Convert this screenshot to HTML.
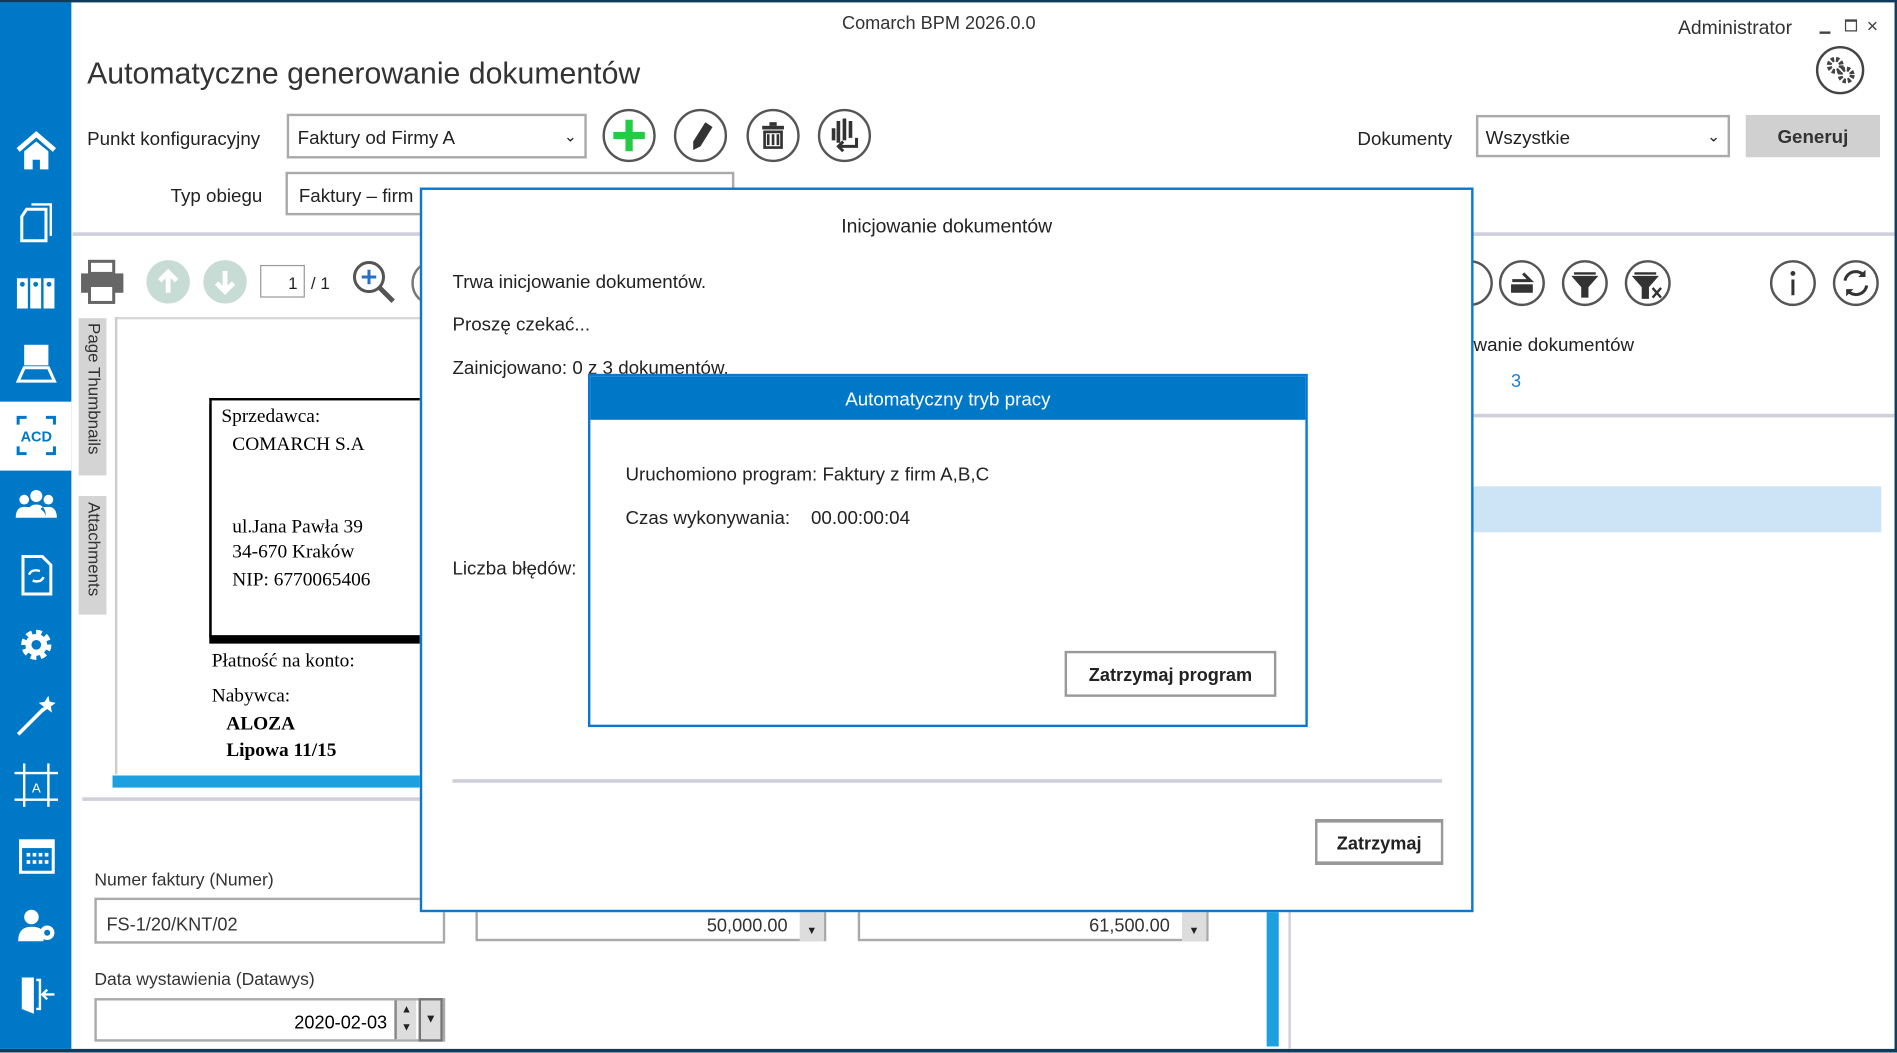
<!DOCTYPE html>
<html><head><meta charset="utf-8">
<style>
*{margin:0;padding:0;box-sizing:border-box}
html,body{width:1897px;height:1052px;overflow:hidden;background:#fff}
#w{position:absolute;left:0;top:0;width:1568px;height:870px;transform:scale(1.2098);transform-origin:0 0;font-family:"Liberation Sans",sans-serif;color:#222;background:#fff}
.a{position:absolute}
.t{position:absolute;white-space:nowrap;font-size:15px;color:#222;margin-top:2px}
.box{position:absolute;border:2px solid #aaa;background:#fff}
.cb{position:absolute;width:44px;height:44px;border:2px solid #555;border-radius:50%;background:#fff}
.rc{position:absolute;width:38px;height:38px;border:2px solid #555;border-radius:50%;background:#fff}
.sb svg{position:absolute;left:12px}
.btn{position:absolute;border:2px solid #999;background:#fff;font-weight:bold;font-size:15px;text-align:center}
</style></head><body><div id="w">
<div class="a" style="left:0;top:0;width:1568px;height:2px;background:#0e3a5c"></div>
<div class="a" style="left:0;top:867px;width:1568px;height:3px;background:#0e3a5c"></div>
<div class="a" style="left:1566px;top:0;width:2px;height:870px;background:#0e3a5c"></div>
<div class="a sb" style="left:0;top:2px;width:59px;height:865px;background:#0078c8">
 <div class="a" style="left:0;top:330px;width:59px;height:57px;background:#fff"></div>
 <svg style="top:105px" width="36" height="36" viewBox="0 0 36 36"><path d="M3 17L18 4l15 13" stroke="#fff" stroke-width="4" fill="none"/><path d="M8 18v15h7v-8h6v8h7V18L18 10z" fill="#fff"/></svg>
 <svg style="top:163px" width="36" height="36" viewBox="0 0 36 36"><path d="M14 4h16v26" stroke="#fff" stroke-width="2" fill="none"/><path d="M10 8h16v26H6V14z" stroke="#fff" stroke-width="2.5" fill="none"/></svg>
 <svg style="top:222px" width="36" height="36" viewBox="0 0 36 36" fill="#fff"><rect x="2" y="6" width="9" height="25"/><rect x="13" y="6" width="9" height="25"/><rect x="24" y="6" width="9" height="25"/><circle cx="6.5" cy="11" r="2" fill="#0078c8"/><circle cx="17.5" cy="11" r="2" fill="#0078c8"/><circle cx="28.5" cy="11" r="2" fill="#0078c8"/></svg>
 <svg style="top:280px" width="36" height="36" viewBox="0 0 36 36" fill="#fff"><rect x="8" y="3" width="20" height="17"/><path d="M3 33l5-11h20l5 11z" fill="none" stroke="#fff" stroke-width="2.5"/></svg>
 <svg style="top:340px" width="36" height="36" viewBox="0 0 36 36"><path d="M3 9V3h7M26 3h7v6M3 27v6h7M26 33h7v-6" stroke="#0078c8" stroke-width="2.5" fill="none"/><text x="18" y="23" text-anchor="middle" font-size="12" font-weight="bold" fill="#0078c8" font-family="Liberation Sans">ACD</text></svg>
 <svg style="top:398px" width="36" height="36" viewBox="0 0 36 36" fill="#fff"><circle cx="18" cy="10" r="5"/><circle cx="8" cy="13" r="4"/><circle cx="28" cy="13" r="4"/><path d="M10 28q0-11 8-11t8 11zM1 28q0-9 7-9t6 2q-4 3-4 7zM35 28q0-9-7-9t-6 2q4 3 4 7z"/></svg>
 <svg style="top:455px" width="36" height="36" viewBox="0 0 36 36"><path d="M7 3h16l7 7v24H7z" stroke="#fff" stroke-width="2.5" fill="none"/><path d="M12 18q2-5 9-3M24 20q-2 5-9 3" stroke="#fff" stroke-width="2" fill="none"/></svg>
 <svg style="top:513px" width="36" height="36" viewBox="0 0 36 36"><circle cx="18" cy="18" r="9" stroke="#fff" stroke-width="7" fill="none" stroke-dasharray="4 3"/><circle cx="18" cy="18" r="9" fill="#fff"/><circle cx="18" cy="18" r="4" fill="#0078c8"/></svg>
 <svg style="top:571px" width="36" height="36" viewBox="0 0 36 36"><path d="M3 34L24 13" stroke="#fff" stroke-width="3"/><path d="M28 2l1 5 5 1-4 3 1 5-4-3-4 3 1-5-4-3 5-1z" fill="#fff"/></svg>
 <svg style="top:629px" width="36" height="36" viewBox="0 0 36 36"><path d="M0 8h36M0 30h36M8 0v36M28 0v36" stroke="#fff" stroke-width="2"/><text x="18" y="24" text-anchor="middle" font-size="11" fill="#fff" font-family="Liberation Sans">A</text></svg>
 <svg style="top:688px" width="36" height="36" viewBox="0 0 36 36"><rect x="5" y="5" width="27" height="26" stroke="#fff" stroke-width="2.5" fill="none"/><rect x="5" y="5" width="27" height="6" fill="#fff"/><g fill="#fff"><rect x="10" y="15" width="3" height="3"/><rect x="15" y="15" width="3" height="3"/><rect x="20" y="15" width="3" height="3"/><rect x="25" y="15" width="3" height="3"/><rect x="10" y="21" width="3" height="3"/><rect x="15" y="21" width="3" height="3"/><rect x="20" y="21" width="3" height="3"/><rect x="25" y="21" width="3" height="3"/></g></svg>
 <svg style="top:745px" width="36" height="36" viewBox="0 0 36 36" fill="#fff"><circle cx="14" cy="11" r="6"/><path d="M3 31q0-12 11-12t10 8v4z"/><circle cx="27" cy="24" r="6"/><circle cx="27" cy="24" r="2.5" fill="#0078c8"/></svg>
 <svg style="top:802px" width="36" height="36" viewBox="0 0 36 36" fill="#fff"><path d="M6 4h10v30L6 30z"/><path d="M18 6h3v24h-3" fill="none" stroke="#fff" stroke-width="2"/><path d="M33 18h-9M27 14l-4 4 4 4" stroke="#fff" stroke-width="2" fill="none"/></svg>
</div>
<div class="t" style="left:0;width:1552px;text-align:center;top:9px;font-size:15px;color:#333">Comarch BPM 2026.0.0</div>
<div class="t" style="left:1387px;top:13px;font-size:16px;color:#333">Administrator</div>
<div class="a" style="left:1504px;top:26px;width:9px;height:2px;background:#444"></div>
<div class="a" style="left:1525px;top:16px;width:10px;height:10px;border:1.5px solid #444;border-top-width:2.5px"></div>
<div class="t" style="left:1543px;top:12px;font-size:16px;color:#444">×</div>
<div class="a" style="left:1501px;top:38px;width:40px;height:40px;border:2px solid #444;border-radius:50%"><svg width="36" height="36" viewBox="0 0 36 36"><circle cx="14" cy="14" r="5" stroke="#444" stroke-width="4" fill="none" stroke-dasharray="2.5 1.5"/><circle cx="23" cy="22" r="5" stroke="#444" stroke-width="4" fill="none" stroke-dasharray="2.5 1.5"/></svg></div>
<div class="t" style="left:72px;top:45px;font-size:25px;color:#333">Automatyczne generowanie dokumentów</div>
<div class="t" style="left:72px;top:105px;font-size:15.5px">Punkt konfiguracyjny</div>
<div class="box" style="left:237px;top:94px;width:248px;height:37px"><span class="t" style="left:7px;top:8px;font-size:15.5px">Faktury od Firmy A</span><span class="t" style="right:6px;top:7px;font-size:13px">&#8964;</span></div>
<div class="cb" style="left:498px;top:90px"><svg width="40" height="40"><path d="M20 7v26M7 20h26" stroke="#22cc44" stroke-width="6"/></svg></div>
<div class="cb" style="left:557px;top:90px"><svg width="40" height="40"><path d="M24 9l6 4-10 16-6 3 0-7z" fill="#333"/></svg></div>
<div class="cb" style="left:617px;top:90px"><svg width="40" height="40"><rect x="11" y="12" width="18" height="3" fill="#333"/><rect x="17" y="9" width="6" height="3" fill="#333"/><path d="M13 17h14v13H13z M16 19v9M20 19v9M24 19v9" stroke="#333" stroke-width="2.2" fill="none"/></svg></div>
<div class="cb" style="left:676px;top:90px"><svg width="40" height="40"><path d="M15 8v18M20 6v18M25 8v14M11 14v10" stroke="#333" stroke-width="3"/><path d="M30 22v7H16M19 25l-4 4 4 4" stroke="#333" stroke-width="2.5" fill="none"/></svg></div>
<div class="t" style="left:141px;top:152px;font-size:15.5px">Typ obiegu</div>
<div class="box" style="left:236px;top:142px;width:371px;height:36px"><span class="t" style="left:9px;top:8px;font-size:15.5px">Faktury – firm</span></div>
<div class="t" style="left:1122px;top:105px;font-size:15.5px">Dokumenty</div>
<div class="box" style="left:1220px;top:95px;width:210px;height:35px"><span class="t" style="left:6px;top:7px;font-size:15.5px">Wszystkie</span><span class="t" style="right:6px;top:6px;font-size:13px">&#8964;</span></div>
<div class="a" style="left:1443px;top:95px;width:111px;height:35px;background:#d0d0d0;font-weight:bold;font-size:15.5px;text-align:center;line-height:37px;color:#333">Generuj</div>
<div class="a" style="left:60px;top:192px;width:1506px;height:3px;background:#cfd0dc"></div>
<svg class="a" style="left:66px;top:214px" width="38" height="38"><rect x="8" y="2" width="20" height="10" stroke="#666" stroke-width="2.5" fill="#fff"/><rect x="1" y="12" width="35" height="16" fill="#666"/><rect x="8" y="22" width="20" height="14" stroke="#666" stroke-width="2.5" fill="#fff"/></svg>
<div class="a" style="left:121px;top:215px;width:36px;height:36px;border-radius:50%;background:#c7dcd5"><svg width="36" height="36"><path d="M18 27V11M11 17l7-7 7 7" stroke="#fff" stroke-width="4" fill="none"/></svg></div>
<div class="a" style="left:168px;top:215px;width:36px;height:36px;border-radius:50%;background:#c7dcd5"><svg width="36" height="36"><path d="M18 9v16M11 19l7 7 7-7" stroke="#fff" stroke-width="4" fill="none"/></svg></div>
<div class="a" style="left:215px;top:219px;width:37px;height:27px;border:1.5px solid #999"><span class="t" style="right:5px;top:4px;font-size:14px">1</span></div>
<div class="t" style="left:257px;top:224px;font-size:14px">/ 1</div>
<svg class="a" style="left:290px;top:214px" width="40" height="40"><circle cx="15" cy="15" r="12" stroke="#555" stroke-width="2.5" fill="none"/><path d="M15 9v12M9 15h12" stroke="#2a6fc0" stroke-width="2.5"/><path d="M24 24l11 11" stroke="#555" stroke-width="4"/></svg>
<div class="a" style="left:340px;top:215px;width:38px;height:38px;border:2px solid #777;border-radius:50%"></div>
<div class="a" style="left:1196px;top:215px;width:38px;height:38px;border:2px solid #555;border-radius:50%"></div>
<div class="a" style="left:65px;top:263px;width:23px;height:130px;background:#d4d4d4"><div class="t" style="left:1px;top:2px;transform-origin:0 0;transform:rotate(90deg) translate(0,-20px);font-size:14px;color:#333">Page Thumbnails</div></div>
<div class="a" style="left:65px;top:410px;width:23px;height:98px;background:#d4d4d4"><div class="t" style="left:1px;top:3px;transform-origin:0 0;transform:rotate(90deg) translate(0,-20px);font-size:14px;color:#333">Attachments</div></div>
<div class="a" style="left:95px;top:262px;width:260px;height:2px;background:#d8d8d8"></div>
<div class="a" style="left:95px;top:262px;width:2px;height:378px;background:#ccc"></div>
<div class="a" style="left:173px;top:329px;width:180px;height:198px;border:2px solid #000;border-right:none;box-shadow:0 5px 0 #000"></div>
<div class="t" style="left:183px;top:334px;font-family:'Liberation Serif',serif;font-size:16px;color:#000">Sprzedawca:</div>
<div class="t" style="left:192px;top:357px;font-family:'Liberation Serif',serif;font-size:16px;color:#000">COMARCH S.A</div>
<div class="t" style="left:192px;top:425px;font-family:'Liberation Serif',serif;font-size:16px;color:#000">ul.Jana Pawła 39</div>
<div class="t" style="left:192px;top:446px;font-family:'Liberation Serif',serif;font-size:16px;color:#000">34-670 Kraków</div>
<div class="t" style="left:192px;top:469px;font-family:'Liberation Serif',serif;font-size:16px;color:#000">NIP: 6770065406</div>
<div class="t" style="left:175px;top:536px;font-family:'Liberation Serif',serif;font-size:16px;color:#000">Płatność na konto:</div>
<div class="t" style="left:175px;top:565px;font-family:'Liberation Serif',serif;font-size:16px;color:#000">Nabywca:</div>
<div class="t" style="left:187px;top:588px;font-family:'Liberation Serif',serif;font-size:16px;font-weight:bold;color:#000">ALOZA</div>
<div class="t" style="left:187px;top:610px;font-family:'Liberation Serif',serif;font-size:16px;font-weight:bold;color:#000">Lipowa 11/15</div>
<div class="a" style="left:93px;top:641px;width:260px;height:10px;background:#1ca0e0"></div>
<div class="a" style="left:68px;top:659px;width:290px;height:3px;background:#cfd0dc"></div>
<div class="t" style="left:78px;top:718px;font-size:14.5px;color:#333">Numer faktury (Numer)</div>
<div class="box" style="left:78px;top:742px;width:290px;height:38px"><span class="t" style="left:8px;top:10px;font-size:15px;color:#333">FS-1/20/KNT/02</span></div>
<div class="t" style="left:78px;top:800px;font-size:14.5px;color:#333">Data wystawienia (Datawys)</div>
<div class="box" style="left:78px;top:825px;width:290px;height:36px"><span class="t" style="right:46px;top:8px;font-size:15px;color:#000">2020-02-03</span><div class="a" style="right:22px;top:0;width:18px;height:32px;background:#ddd;border-left:2px solid #888;font-size:9px;text-align:center;line-height:15px">▲<br>▼</div><div class="a" style="right:0;top:-2px;width:20px;height:36px;background:#ddd;border:2px solid #777;font-size:10px;text-align:center;line-height:32px">▼</div></div>
<div class="box" style="left:393px;top:752px;width:290px;height:26px"><span class="t" style="right:30px;top:1px;font-size:15px;color:#333">50,000.00</span><div class="a" style="right:0;top:0;width:20px;height:24px;background:#ddd;font-size:9px;text-align:center;line-height:30px">▼</div></div>
<div class="box" style="left:709px;top:752px;width:290px;height:26px"><span class="t" style="right:30px;top:1px;font-size:15px;color:#333">61,500.00</span><div class="a" style="right:0;top:0;width:20px;height:24px;background:#ddd;font-size:9px;text-align:center;line-height:30px">▼</div></div>
<div class="a" style="left:1047px;top:752px;width:10px;height:113px;background:#1ca0e0"></div>
<div class="a" style="left:1065px;top:752px;width:2px;height:115px;background:#cfd0dc"></div>
<div class="rc" style="left:1239px;top:215px"><svg width="34" height="34"><path d="M9 15h15l-6-6" stroke="#333" stroke-width="2.5" fill="none"/><rect x="8" y="18" width="18" height="7" fill="#333"/></svg></div>
<div class="rc" style="left:1291px;top:215px"><svg width="34" height="34"><path d="M8 9h18M8 12h18l-7 8v8h-4v-8z" stroke="#333" stroke-width="2" fill="#333"/></svg></div>
<div class="rc" style="left:1343px;top:215px"><svg width="34" height="34"><path d="M6 9h18M6 12h18l-7 8v9h-4v-9z" stroke="#333" stroke-width="2" fill="#333"/><path d="M21 21l7 8M28 21l-7 8" stroke="#333" stroke-width="2"/></svg></div>
<div class="rc" style="left:1463px;top:215px"><svg width="34" height="34"><circle cx="17" cy="9" r="2" fill="#333"/><path d="M17 14v13" stroke="#333" stroke-width="2.5"/></svg></div>
<div class="rc" style="left:1515px;top:215px"><svg width="34" height="34"><path d="M8 15a9 9 0 0 1 16-4M26 19a9 9 0 0 1-16 4" stroke="#333" stroke-width="2.5" fill="none"/><path d="M25 6v6h-6M9 28v-6h6" fill="#333"/></svg></div>
<div class="t" style="left:1218px;top:275px;font-size:15.5px">wanie dokumentów</div>
<div class="t" style="left:1249px;top:305px;font-size:15px;color:#1a7fd4">3</div>
<div class="a" style="left:1218px;top:342px;width:348px;height:3px;background:#cfd0dc"></div>
<div class="a" style="left:1218px;top:402px;width:337px;height:38px;background:#cde3f6"></div>
<div class="a" style="left:347px;top:155px;width:871px;height:599px;border:2px solid #0a78d0;background:#fff">
 <div class="t" style="left:0;width:867px;text-align:center;top:20px;font-size:16px">Inicjowanie dokumentów</div>
 <div class="t" style="left:25px;top:66px;font-size:15.5px">Trwa inicjowanie dokumentów.</div>
 <div class="t" style="left:25px;top:101px;font-size:15.5px">Proszę czekać...</div>
 <div class="t" style="left:25px;top:137px;font-size:15.5px">Zainicjowano: 0 z 3 dokumentów.</div>
 <div class="t" style="left:25px;top:303px;font-size:15.5px">Liczba błędów:</div>
 <div class="a" style="left:25px;top:487px;width:818px;height:3px;background:#cfd0dc"></div>
 <div class="btn" style="left:738px;top:520px;width:106px;height:38px;line-height:36px;border-top-width:3px;border-bottom-width:3px">Zatrzymaj</div>
</div>
<div class="a" style="left:486px;top:309px;width:595px;height:292px;border:2px solid #0a78d0;background:#fff">
 <div class="a" style="left:0;top:0;width:591px;height:36px;background:#0078c8;color:#fff;text-align:center;line-height:40px;font-size:15.5px">Automatyczny tryb pracy</div>
 <div class="t" style="left:29px;top:71px;font-size:15.5px">Uruchomiono program: Faktury z firm A,B,C</div>
 <div class="t" style="left:29px;top:107px;font-size:15.5px">Czas wykonywania:&nbsp;&nbsp;&nbsp; 00.00:00:04</div>
 <div class="btn" style="left:392px;top:227px;width:175px;height:38px;line-height:37px">Zatrzymaj program</div>
</div>
</div></body></html>
